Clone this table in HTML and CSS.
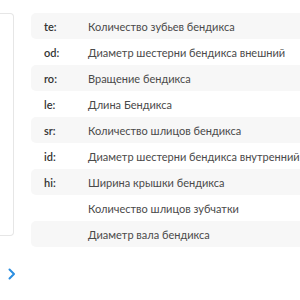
FILE: index.html
```html
<!DOCTYPE html>
<html>
<head>
<meta charset="utf-8">
<link rel="stylesheet" href="styles.css">
</head>
<body>
<div class="page">
  <div class="top">
    <div class="card"></div>
    <div class="list">
      <div class="row shaded"><span class="key">te:</span><span class="val">Количество зубьев бендикса</span></div>
      <div class="row"><span class="key">od:</span><span class="val">Диаметр шестерни бендикса внешний</span></div>
      <div class="row shaded"><span class="key">ro:</span><span class="val">Вращение бендикса</span></div>
      <div class="row"><span class="key">le:</span><span class="val">Длина Бендикса</span></div>
      <div class="row shaded"><span class="key">sr:</span><span class="val">Количество шлицов бендикса</span></div>
      <div class="row"><span class="key">id:</span><span class="val">Диаметр шестерни бендикса внутренний</span></div>
      <div class="row shaded"><span class="key">hi:</span><span class="val">Ширина крышки бендикса</span></div>
      <div class="row"><span class="key"></span><span class="val">Количество шлицов зубчатки</span></div>
      <div class="row shaded"><span class="key"></span><span class="val">Диаметр вала бендикса</span></div>
    </div>
  </div>
  <div class="more">
    <svg width="8" height="12" viewBox="0 0 8 12"><path d="M1.5 1.5 L6 6 L1.5 10.5" fill="none" stroke="#2b8ee0" stroke-width="2" stroke-linecap="round" stroke-linejoin="round"/></svg>
  </div>
</div>
</body>
</html>
```
FILE: styles.css
```css
html, body {
  margin: 0;
  padding: 0;
  background: #fff;
  overflow: hidden;
}
body {
  font-family: Lato, "Noto Sans", sans-serif;
  font-size: 11px;
  color: #444;
}
.page {
  padding-top: 13px;
}
.top {
  display: flex;
  align-items: flex-start;
  gap: 17px;
}
.card {
  flex: none;
  width: 14px;
  height: 223px;
  border: 1px solid #e6e6e6;
  border-left: none;
  border-radius: 0 4px 4px 0;
  box-sizing: border-box;
}
.list {
  flex: 1;
  min-width: 0;
  display: flex;
  flex-direction: column;
}
.row {
  height: 26px;
  display: flex;
  align-items: center;
  padding-left: 13px;
  border-radius: 5px 0 0 5px;
  white-space: nowrap;
}
.row.shaded {
  background: #f7f7f7;
}
.key {
  width: 44px;
  flex: none;
  color: #333;
  font-weight: 600;
}
.val {
  color: #4a4a4a;
}
.more {
  padding: 21px 0 0 8px;
  height: 12px;
  display: flex;
}
```
